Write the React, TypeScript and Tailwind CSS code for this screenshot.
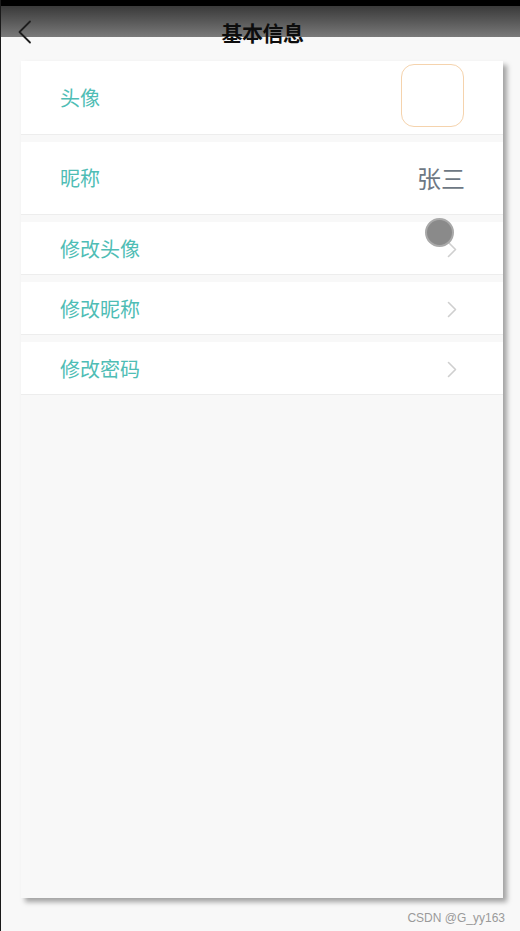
import React from "react";

const Chevron = () => (
  <svg width="10" height="17" viewBox="0 0 10 17" fill="none">
    <path d="M1.5 1.5 L8.5 8.5 L1.5 15.5" stroke="#cfcfcf" strokeWidth="1.6" strokeLinecap="round" strokeLinejoin="round" />
  </svg>
);

const font = { fontFamily: '"Noto Sans CJK SC", "Noto Sans", sans-serif' };

export default function App() {
  const links = ["修改头像", "修改昵称", "修改密码"];
  return (
    <div
      className="relative w-[520px] h-[931px] bg-[#f8f8f8] flex flex-col overflow-hidden border-l border-[#1a1a1a]"
      style={font}
    >
      <div className="h-[6px] bg-black shrink-0" />
      <div className="h-[31px] shrink-0 bg-gradient-to-b from-[#3a3a3a] to-[#7a7a7a] grid grid-cols-[80px_1fr_80px] relative z-10">
        <div className="pl-[16px] pt-[14px]">
          <svg width="15" height="24" viewBox="0 0 15 24" fill="none">
            <path d="M13 1.5 L2.5 12 L13 22.5" stroke="#1e1e1e" strokeWidth="1.8" strokeLinecap="round" strokeLinejoin="round" />
          </svg>
        </div>
        <div className="flex justify-center pt-[15px] pl-[4px]">
          <span className="text-[21px] leading-[23px] font-bold text-[#0d0d0d] tracking-[-0.5px]">基本信息</span>
        </div>
        <div />
      </div>

      <div className="relative ml-[20px] w-[482px] mt-[24px] h-[837px] bg-[#f8f8f8] shadow-[4px_4px_5px_rgba(0,0,0,0.35)] flex flex-col">
        <div className="h-[74px] bg-white border-b border-[#ededed] flex items-center justify-between pl-[39px] pr-[39px]">
          <span className="text-[20px] text-[#4fbdb5]">头像</span>
          <div className="w-[63px] h-[63px] rounded-[13px] border border-[#f5d3ad] bg-white self-start mt-[3px]" />
        </div>
        <div className="mt-[7px] h-[73px] bg-white border-b border-[#ededed] flex items-center justify-between pl-[39px] pr-[38px]">
          <span className="text-[20px] text-[#4fbdb5]">昵称</span>
          <span className="text-[24px] text-[#6e7884]">张三</span>
        </div>
        {links.map((t) => (
          <div
            key={t}
            className="mt-[7px] h-[53px] bg-white border-b border-[#ededed] flex items-center justify-between pl-[39px] pr-[46px] pt-[2px]"
          >
            <span className="text-[20px] text-[#4fbdb5]">{t}</span>
            <Chevron />
          </div>
        ))}
        <div className="absolute left-[404px] top-[157px] w-[29px] h-[29px] rounded-full bg-[#8a8a8a] border-[2px] border-[#a9a9a9]" />
      </div>

      <div className="flex justify-end pr-[15px] mt-[11px]">
        <span className="text-[12px] text-[#9a9a9a]" style={{ fontFamily: '"Liberation Sans", Arial, sans-serif' }}>
          CSDN @G_yy163
        </span>
      </div>
    </div>
  );
}
